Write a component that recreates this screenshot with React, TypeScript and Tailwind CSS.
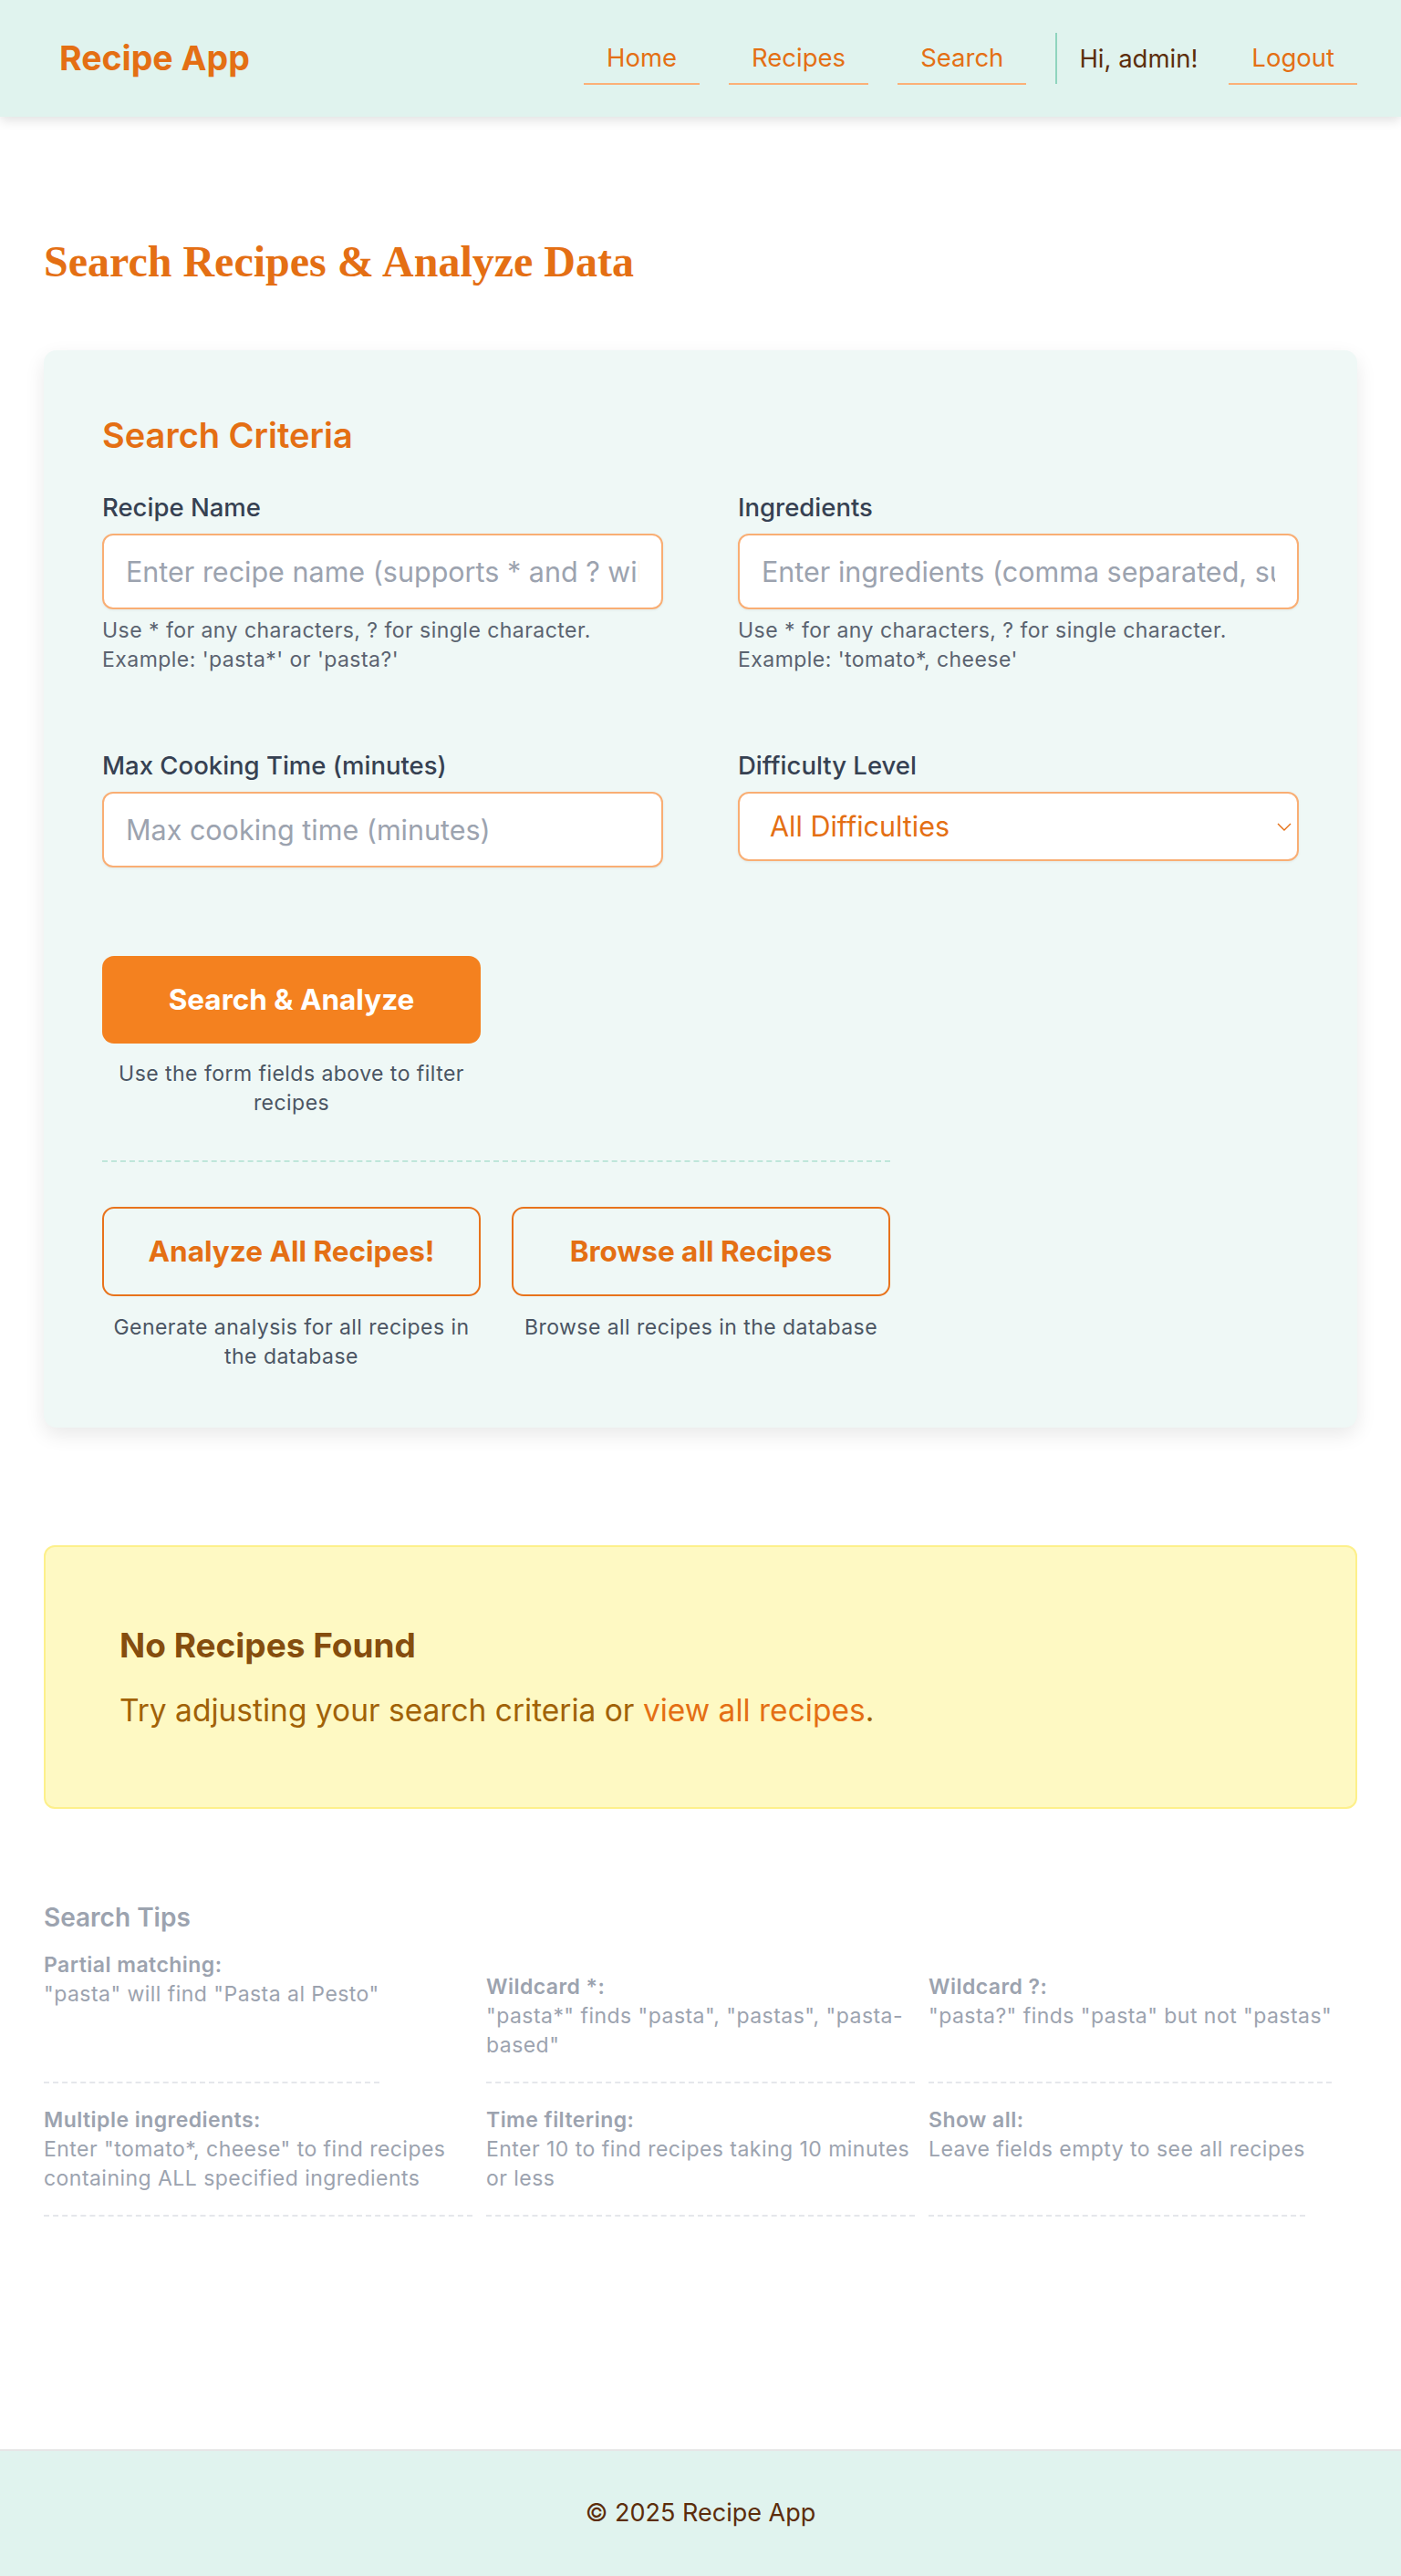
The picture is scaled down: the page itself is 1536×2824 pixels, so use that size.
import React from "react";

const tips = [
  { t: "Partial matching:", d: "\"pasta\" will find \"Pasta al Pesto\"" },
  { t: "Wildcard *:", d: "\"pasta*\" finds \"pasta\", \"pastas\", \"pasta-based\"" },
  { t: "Wildcard ?:", d: "\"pasta?\" finds \"pasta\" but not \"pastas\"" },
  { t: "Multiple ingredients:", d: "Enter \"tomato*, cheese\" to find recipes containing ALL specified ingredients" },
  { t: "Time filtering:", d: "Enter 10 to find recipes taking 10 minutes or less" },
  { t: "Show all:", d: "Leave fields empty to see all recipes" },
];

function Field({ label, placeholder, help }: { label: string; placeholder: string; help?: string[] }) {
  return (
    <div>
      <label className="block text-[27.5px] leading-[40px] font-medium text-[#364152]">{label}</label>
      <input
        className="mt-[9px] block w-full h-[83px] rounded-[12px] border-2 border-[#f9ae74] bg-white px-[24px] text-[30.5px] text-[#374151] placeholder:text-[#9ca3af] shadow-[0_1px_3px_rgba(0,0,0,0.06)] outline-none"
        placeholder={placeholder}
      />
      {help && (
        <p className="mt-[7px] text-[23px] tracking-[0.02em] leading-[32px] text-[#5b6370]">
          {help.map((h) => (
            <span key={h} className="block">{h}</span>
          ))}
        </p>
      )}
    </div>
  );
}

export default function App() {
  return (
    <div className="min-h-screen flex flex-col bg-white font-['Inter','Noto_Sans',sans-serif]">
      <header className="relative z-10 h-[128px] shrink-0 bg-[#e0f3ee] shadow-[0_4px_12px_rgba(0,0,0,0.12)] flex items-center justify-between pl-[65px] pr-[48px]">
        <div className="text-[37.5px] font-bold leading-none text-[#e46f14]">Recipe App</div>
        <nav className="flex items-center text-[27.5px]">
          <a className="px-[25px] pt-[8px] pb-[8px] leading-[40px] text-[#e46f14] border-b-2 border-[#fbb077]">Home</a>
          <a className="ml-[32px] px-[25px] pt-[8px] pb-[8px] leading-[40px] text-[#e46f14] border-b-2 border-[#fbb077]">Recipes</a>
          <a className="ml-[32px] px-[25px] pt-[8px] pb-[8px] leading-[40px] text-[#e46f14] border-b-2 border-[#fbb077]">Search</a>
          <div className="ml-[32px] mr-[24px] w-[2px] h-[56px] bg-[#8fd4be]" />
          <span className="leading-[40px] text-[#5c2d0b]">Hi, admin!</span>
          <a className="ml-[34px] px-[25px] pt-[8px] pb-[8px] leading-[40px] text-[#e46f14] border-b-2 border-[#fbb077]">Logout</a>
        </nav>
      </header>

      <main className="flex-1 px-[48px]">
        <h1 className="mt-[135px] font-['Liberation_Serif','Times_New_Roman',serif] font-bold text-[48px] leading-[48px] text-[#e46f14]">
          Search Recipes &amp; Analyze Data
        </h1>

        <section className="mt-[73px] rounded-[14px] bg-[#eff8f6] shadow-[0_8px_22px_rgba(0,0,0,0.09)] px-[64px] pt-[64px] pb-[62px]">
          <h2 className="text-[38px] leading-[58px] font-semibold text-[#e46f14]">Search Criteria</h2>
          <div className="mt-[30px] grid grid-cols-2 gap-x-[82px] gap-y-[80px]">
            <Field
              label="Recipe Name"
              placeholder="Enter recipe name (supports * and ? wildcards)"
              help={["Use * for any characters, ? for single character.", "Example: 'pasta*' or 'pasta?'"]}
            />
            <Field
              label="Ingredients"
              placeholder="Enter ingredients (comma separated, supports wildcards)"
              help={["Use * for any characters, ? for single character.", "Example: 'tomato*, cheese'"]}
            />
            <Field label="Max Cooking Time (minutes)" placeholder="Max cooking time (minutes)" />
            <div>
              <label className="block text-[27.5px] leading-[40px] font-medium text-[#364152]">Difficulty Level</label>
              <div className="relative mt-[9px]">
                <select className="block w-full h-[76px] appearance-none rounded-[12px] border-2 border-[#f9ae74] bg-white pl-[33px] pr-[40px] text-[30.5px] text-[#e46f14] shadow-[0_1px_3px_rgba(0,0,0,0.06)] outline-none">
                  <option>All Difficulties</option>
                  <option>Easy</option>
                  <option>Medium</option>
                  <option>Intermediate</option>
                  <option>Hard</option>
                </select>
                <svg className="pointer-events-none absolute right-[8px] top-[34px]" width="16" height="9" viewBox="0 0 16 9" fill="none">
                  <polyline points="1,1 8,8 15,1" stroke="#e46f14" strokeWidth="1.4" />
                </svg>
              </div>
            </div>
          </div>

          <div className="mt-[97px] w-[864px]">
            <div className="w-[415px]">
              <button className="block w-full h-[96px] rounded-[13px] bg-[#f4811f] text-[31.5px] font-bold text-white">
                Search &amp; Analyze
              </button>
              <p className="mt-[17px] text-center text-[23px] tracking-[0.02em] leading-[32px] text-[#4b5563]">
                Use the form fields above to filter recipes
              </p>
            </div>
            <div className="mt-[47px] border-t-2 border-dashed border-[#bfe6da]" />
            <div className="mt-[49px] grid grid-cols-2 gap-x-[34px]">
              <div>
                <button className="block w-full h-[98px] rounded-[13px] border-2 border-[#e8731c] text-[31.5px] font-bold text-[#e46f14]">
                  Analyze All Recipes!
                </button>
                <p className="mt-[18px] text-center text-[23px] tracking-[0.02em] leading-[32px] text-[#4b5563]">
                  Generate analysis for all recipes in the database
                </p>
              </div>
              <div>
                <button className="block w-full h-[98px] rounded-[13px] border-2 border-[#e8731c] text-[31.5px] font-bold text-[#e46f14]">
                  Browse all Recipes
                </button>
                <p className="mt-[18px] text-center text-[23px] tracking-[0.02em] leading-[32px] text-[#4b5563]">
                  Browse all recipes in the database
                </p>
              </div>
            </div>
          </div>
        </section>

        <div className="mt-[129px] rounded-[12px] border-2 border-[#fdf08b] bg-[#fef9c3] px-[81px] pt-[84px] pb-[82px]">
          <h3 className="text-[37px] leading-[48px] font-bold text-[#854d0e]">No Recipes Found</h3>
          <p className="mt-[23px] text-[33.5px] leading-[48px] text-[#a16207]">
            Try adjusting your search criteria or <a className="text-[#e46f14]">view all recipes</a>.
          </p>
        </div>

        <div className="mt-[99px] pb-[40px]">
          <h4 className="text-[28px] leading-[40px] font-semibold text-[#9ca3af]">Search Tips</h4>
          <div className="mt-[16px] grid grid-cols-3 gap-x-[15px] justify-items-start">
            {tips.map((tip, i) => (
              <div
                key={tip.t}
                className={
                  i > 0
                    ? "mt-[24px] border-b-2 border-dashed border-[#e5e7eb] pb-[24px] text-[23px] tracking-[0.02em] leading-[32px] text-[#9ca3af]"
                    : "border-b-2 border-dashed border-[#e5e7eb] pb-[24px] text-[23px] tracking-[0.02em] leading-[32px] text-[#9ca3af]"
                }
              >
                <div className="font-semibold">{tip.t}</div>
                <div>{tip.d}</div>
              </div>
            ))}
          </div>
        </div>
      </main>

      <footer className="h-[139px] shrink-0 border-t-2 border-[#e6e6e6] bg-[#e0f3ee] flex items-center justify-center text-[27px] text-[#5c2d0b]">
        © 2025 Recipe App
      </footer>
    </div>
  );
}
